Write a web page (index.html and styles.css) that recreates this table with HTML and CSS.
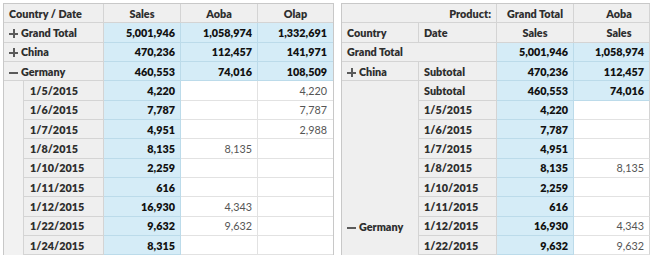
FILE: index.html
```html
<!DOCTYPE html>
<html lang="en">
<head>
    <meta charset="UTF-8">
    <meta name="viewport" content="width=device-width, initial-scale=1.0">
    <title>Pivot Grids</title>
    <link rel="stylesheet" href="styles.css">
</head>
<body>
    <div class="page">
        <!-- compact layout -->
        <div class="grid grid-left">
            <table>
                <colgroup>
                    <col class="c-ind">
                    <col class="c-date">
                    <col class="c-val">
                    <col class="c-val">
                    <col class="c-last">
                </colgroup>
                <tr class="hdr">
                    <th colspan="2" class="lft">Country / Date</th>
                    <th>Sales</th>
                    <th>Aoba</th>
                    <th class="end">Olap</th>
                </tr>
                <tr class="tot">
                    <th colspan="2" class="lft"><span class="tog plus"></span>Grand Total</th>
                    <td>5,001,946</td>
                    <td>1,058,974</td>
                    <td class="end">1,332,691</td>
                </tr>
                <tr class="tot">
                    <th colspan="2" class="lft"><span class="tog plus"></span>China</th>
                    <td>470,236</td>
                    <td>112,457</td>
                    <td class="end">141,971</td>
                </tr>
                <tr class="tot">
                    <th colspan="2" class="lft"><span class="tog minus"></span>Germany</th>
                    <td>460,553</td>
                    <td>74,016</td>
                    <td class="end">108,509</td>
                </tr>
                <tr>
                    <th rowspan="9" class="ind"></th>
                    <th class="lft date">1/5/2015</th>
                    <td class="sales">4,220</td>
                    <td class="plain"></td>
                    <td class="plain end">4,220</td>
                </tr>
                <tr>
                    <th class="lft date">1/6/2015</th>
                    <td class="sales">7,787</td>
                    <td class="plain"></td>
                    <td class="plain end">7,787</td>
                </tr>
                <tr>
                    <th class="lft date">1/7/2015</th>
                    <td class="sales">4,951</td>
                    <td class="plain"></td>
                    <td class="plain end">2,988</td>
                </tr>
                <tr>
                    <th class="lft date">1/8/2015</th>
                    <td class="sales">8,135</td>
                    <td class="plain">8,135</td>
                    <td class="plain end"></td>
                </tr>
                <tr>
                    <th class="lft date">1/10/2015</th>
                    <td class="sales">2,259</td>
                    <td class="plain"></td>
                    <td class="plain end"></td>
                </tr>
                <tr>
                    <th class="lft date">1/11/2015</th>
                    <td class="sales">616</td>
                    <td class="plain"></td>
                    <td class="plain end"></td>
                </tr>
                <tr>
                    <th class="lft date">1/12/2015</th>
                    <td class="sales">16,930</td>
                    <td class="plain">4,343</td>
                    <td class="plain end"></td>
                </tr>
                <tr>
                    <th class="lft date">1/22/2015</th>
                    <td class="sales">9,632</td>
                    <td class="plain">9,632</td>
                    <td class="plain end"></td>
                </tr>
                <tr>
                    <th class="lft date">1/24/2015</th>
                    <td class="sales">8,315</td>
                    <td class="plain"></td>
                    <td class="plain end"></td>
                </tr>
            </table>
        </div>

        <!-- tabular layout -->
        <div class="grid grid-right">
            <table>
                <colgroup>
                    <col class="c-country">
                    <col class="c-date2">
                    <col class="c-val">
                    <col class="c-aoba">
                </colgroup>
                <tr class="hdr">
                    <th colspan="2" class="rgt">Product:</th>
                    <th>Grand Total</th>
                    <th class="end aoba-h">Aoba</th>
                </tr>
                <tr class="hdr">
                    <th class="lft">Country</th>
                    <th class="lft">Date</th>
                    <th>Sales</th>
                    <th class="end aoba-h">Sales</th>
                </tr>
                <tr class="tot">
                    <th colspan="2" class="lft">Grand Total</th>
                    <td>5,001,946</td>
                    <td class="end">1,058,974</td>
                </tr>
                <tr class="tot">
                    <th class="lft"><span class="tog plus"></span>China</th>
                    <th class="lft">Subtotal</th>
                    <td>470,236</td>
                    <td class="end">112,457</td>
                </tr>
                <tr class="tot">
                    <th rowspan="9" class="lft country-span"><span class="tog minus"></span>Germany</th>
                    <th class="lft">Subtotal</th>
                    <td>460,553</td>
                    <td class="end">74,016</td>
                </tr>
                <tr>
                    <th class="lft">1/5/2015</th>
                    <td class="sales">4,220</td>
                    <td class="plain end"></td>
                </tr>
                <tr>
                    <th class="lft">1/6/2015</th>
                    <td class="sales">7,787</td>
                    <td class="plain end"></td>
                </tr>
                <tr>
                    <th class="lft">1/7/2015</th>
                    <td class="sales">4,951</td>
                    <td class="plain end"></td>
                </tr>
                <tr>
                    <th class="lft">1/8/2015</th>
                    <td class="sales">8,135</td>
                    <td class="plain end">8,135</td>
                </tr>
                <tr>
                    <th class="lft">1/10/2015</th>
                    <td class="sales">2,259</td>
                    <td class="plain end"></td>
                </tr>
                <tr>
                    <th class="lft">1/11/2015</th>
                    <td class="sales">616</td>
                    <td class="plain end"></td>
                </tr>
                <tr>
                    <th class="lft">1/12/2015</th>
                    <td class="sales">16,930</td>
                    <td class="plain end">4,343</td>
                </tr>
                <tr>
                    <th class="lft">1/22/2015</th>
                    <td class="sales">9,632</td>
                    <td class="plain end">9,632</td>
                </tr>
            </table>
        </div>
    </div>
</body>
</html>
```

FILE: styles.css
```css
:root {
    --hdr-bg: #efefef;
    --hdr-line: #d4d4d4;
    --blue-bg: #d5ecf7;
    --blue-line: #bcdbea;
    --cell-line: #e2e2e2;
    --text-color: #333;
    --outer-line: #c8c8c8;
}

* {
    margin: 0;
    padding: 0;
    box-sizing: border-box;
}

body {
    font-family: Lato, 'Open Sans', sans-serif;
    font-size: 10.8px;
    color: var(--text-color);
    background-color: #fff;
}

.page {
    display: flex;
    align-items: flex-start;
    gap: 7px;
    padding: 3px 0 0 3px;
}

.grid {
    border: 1px solid var(--outer-line);
    border-bottom: none;
    background-color: #fff;
}

.grid-right {
    border-right: none;
}

table {
    border-collapse: separate;
    border-spacing: 0;
    table-layout: fixed;
}

.grid-left table {
    width: 329px;
}

.grid-right table {
    width: 308px;
}

.c-ind { width: 20px; }
.c-date { width: 80px; }
.c-val { width: 77px; }
.c-last { width: 75px; }
.c-country { width: 77px; }
.c-date2 { width: 78px; }
.c-aoba { width: 76px; }

tr {
    height: 19.333px;
}

th, td {
    padding: 0 5px;
    line-height: 15px;
    white-space: nowrap;
    overflow: hidden;
    border-right: 1px solid var(--cell-line);
    border-bottom: 1px solid var(--cell-line);
    text-align: right;
    font-weight: 800;
    color: #111;
}

th {
    background-color: var(--hdr-bg);
    border-color: var(--hdr-line);
    color: #2e2e2e;
}

.hdr th {
    text-align: center;
}

.hdr th.lft,
th.lft {
    text-align: left;
}

.hdr th.rgt {
    text-align: right;
}

.end {
    border-right: none;
}

.grid-left td.end {
    padding-right: 6px;
}

.grid-right .end {
    border-right: 1px solid var(--hdr-line);
}

.aoba-h {
    padding-left: 20px;
}

/* totals rows are highlighted */
.tot td,
td.sales {
    background-color: var(--blue-bg);
    border-color: var(--blue-line);
}

td.plain {
    background-color: #fff;
    font-weight: 400;
    color: #555;
}

.date {
    padding-left: 6px;
}

.ind {
    border-bottom: none;
    background-color: #f2f2f2;
}

.country-span {
    vertical-align: bottom;
    padding-bottom: 21px;
    border-bottom: none;
}

/* expand / collapse glyphs */
.tog {
    display: inline-block;
    position: relative;
    width: 9px;
    height: 9px;
    margin-right: 3px;
    vertical-align: -1px;
}

.tog::before,
.tog::after {
    content: '';
    position: absolute;
    background-color: #5a5a5a;
}

.tog::before {
    left: 0;
    top: 4px;
    width: 9px;
    height: 2px;
}

.plus::after {
    left: 4px;
    top: 0;
    width: 2px;
    height: 9px;
}

.minus::after {
    display: none;
}
```
